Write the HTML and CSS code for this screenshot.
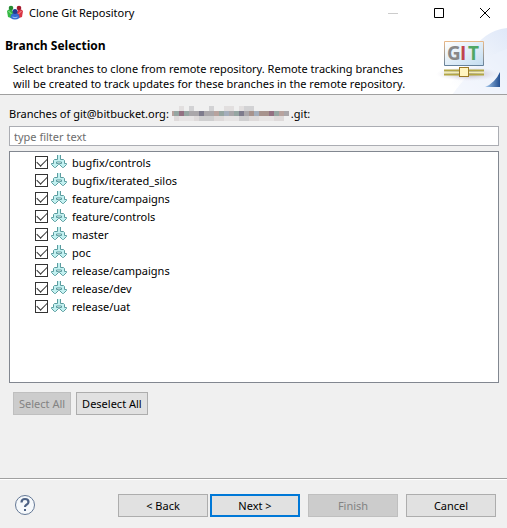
FILE: index.html
```html
<!DOCTYPE html>
<html lang="en">
<head>
<meta charset="utf-8">
<title>Clone Git Repository</title>
<link rel="stylesheet" href="styles.css">
</head>
<body>
<svg width="0" height="0" class="defs" aria-hidden="true">
  <symbol id="branch" viewBox="0 0 16 14">
    <path d="M6.500 0v4.500h-3l-1 1v3h-2v1l3 3h1l3-3v-1h-2v-1.500h5v1.500h-2v1l3 3h1l3-3v-1h-2v-3l-1-1h-3v-4.500" fill="#c3f1f1" stroke="#5a9c9f"/>
  </symbol>
</svg>
<div class="window">
  <header class="titlebar">
    <svg class="app-icon" width="16" height="16" viewBox="0 0 16 16" aria-hidden="true">
      <path d="M0 6q2-3 5-1l2 4-3 4-3-1z" fill="#35b944"/><circle cx="4" cy="3" r="2.300" fill="#238a32"/><path d="M1.500 6l3 3" stroke="#9be8a0"/>
      <path d="M16 6q-2-3-5-1L9 9l3 4 3-1z" fill="#d93545"/><circle cx="12" cy="3" r="2.300" fill="#a3192e"/><path d="M14.500 6l-3 3" stroke="#f4a0a5"/>
      <path d="M3.500 13q0-5 4.500-5t4.500 5q-4.500 3-9 0z" fill="#356bd2"/><circle cx="8" cy="6.500" r="2.500" fill="#203b91"/><path d="M5.500 12q2.500 1.500 5 0" stroke="#9fc4f5" fill="none"/>
    </svg>
    <h1>Clone Git Repository</h1>
    <div class="controls">
      <button aria-label="Minimize" disabled><svg width="10" height="10"><path d="M0 5.500h10" stroke="#ccc"/></svg></button>
      <button aria-label="Maximize"><svg width="10" height="10"><path d="M.5.5h9v9h-9z" stroke="#000" fill="none"/></svg></button>
      <button aria-label="Close"><svg width="10" height="10"><path d="M0 0l10 10M10 0L0 10" stroke="#000"/></svg></button>
    </div>
  </header>
  <section class="banner">
    <div class="intro">
      <h2>Branch Selection</h2>
      <p>Select branches to clone from remote repository. Remote tracking branches<br>will be created to track updates for these branches in the remote repository.</p>
    </div>
    <svg class="logo" width="75" height="70" viewBox="0 0 75 70" aria-hidden="true">
      <defs>
        <linearGradient id="sky" x1="0" y1="1" x2="1" y2="0"><stop offset="0.2" stop-color="#fff"/><stop offset="1" stop-color="#dfe8f8"/></linearGradient>
        <linearGradient id="panel" x1="0" y1="0" x2="1" y2="1"><stop offset="0" stop-color="#fff"/><stop offset="1" stop-color="#c3dcf0"/></linearGradient>
        <linearGradient id="frame" x1="0" y1="0" x2="0" y2="1"><stop offset="0" stop-color="#e8b98a"/><stop offset="1" stop-color="#65819b"/></linearGradient>
        <linearGradient id="corner" x1="0" y1="0" x2="1" y2="0"><stop offset="0" stop-color="#a9cdf0"/><stop offset="1" stop-color="#234f91"/></linearGradient>
        <radialGradient id="shade"><stop offset="0" stop-color="#b9a9b4"/><stop offset="1" stop-color="#d8d8e8" stop-opacity="0"/></radialGradient>
      </defs>
      <path d="M0 70Q25 60 38 30Q50 6 75 3v67z" fill="url(#sky)"/>
      <path d="M20 70Q48 31 75 24v46z" fill="#edf2fc" opacity=".6"/>
      <ellipse cx="36" cy="49" rx="32" ry="7" fill="url(#shade)"/>
      <path d="M12.500 16.500h39v24h-39z" fill="url(#panel)" stroke="url(#frame)"/>
      <text class="git" x="15" y="35"><tspan fill="#888">G</tspan><tspan x="28" fill="#c0444d">I</tspan><tspan x="36" fill="#4fa765">T</tspan></text>
      <path d="M12 45.500h40M12 49.500h40" stroke="#b3a744" stroke-width="2"/>
      <path d="M12 47.500h40" stroke="#f3eeb5"/>
      <rect x="27.500" y="42.500" width="9" height="9" fill="#fff4bf" stroke="#9b7925"/>
      <path d="M68 47v15H53q10-4 15-15z" fill="url(#corner)"/>
    </svg>
  </section>
  <main class="content">
    <label class="caption" for="filter">Branches of git@bitbucket.org:<svg class="redacted" width="118" height="16" viewBox="0 0 118 16" shape-rendering="crispEdges" aria-hidden="true">
      <path d="M7 0h5v5h-5zM52 0h5v5h-5zM57 0h5v5h-5zM67 0h5v5h-5z" fill="#e2dfdf"/>
      <path d="M17 0h5v5h-5zM37 0h5v5h-5zM72 0h10v5h-10z" fill="#d2d2d4"/>
      <path d="M2 10h5v5H2zM22 10h5v5h-5zM42 10h10v5H42zM77 10h10v5H77zM102 10h10v5h-10z" fill="#dedada"/>
      <path d="M7 10h15v5H7zM52 10h15v5H52zM87 10h15v5H87z" fill="#e6e4e4"/>
      <path d="M27 10h15v5H27zM67 10h10v5H67z" fill="#cfcfd0"/>
      <path d="M0 5h2v5H0zM42 5h5v5h-5zM107 5h5v5h-5z" fill="#b8a39e"/>
      <path d="M2 5h5v5H2zM12 5h5v5h-5zM47 5h5v5h-5zM62 5h5v5h-5zM102 5h5v5h-5z" fill="#96a6a2"/>
      <path d="M7 5h5v5H7zM97 5h5v5h-5z" fill="#937283"/>
      <path d="M17 5h10v5H17zM32 5h10v5H32zM57 5h5v5h-5zM72 5h5v5h-5zM112 5h5v5h-5z" fill="#aaa7aa"/>
      <path d="M27 5h5v5h-5zM67 5h5v5h-5z" fill="#7e7c8d"/>
      <path d="M52 5h5v5h-5zM82 5h5v5h-5z" fill="#a4aebc"/>
      <path d="M77 5h5v5h-5zM87 5h10v5H87z" fill="#a7938d"/>
    </svg>.git:</label>
    <input class="filter" id="filter" type="text" placeholder="type filter text">
    <ul class="tree">
      <li><label><input type="checkbox" checked><svg width="16" height="14"><use href="#branch"/></svg>bugfix/controls</label></li>
      <li><label><input type="checkbox" checked><svg width="16" height="14"><use href="#branch"/></svg>bugfix/iterated_silos</label></li>
      <li><label><input type="checkbox" checked><svg width="16" height="14"><use href="#branch"/></svg>feature/campaigns</label></li>
      <li><label><input type="checkbox" checked><svg width="16" height="14"><use href="#branch"/></svg>feature/controls</label></li>
      <li><label><input type="checkbox" checked><svg width="16" height="14"><use href="#branch"/></svg>master</label></li>
      <li><label><input type="checkbox" checked><svg width="16" height="14"><use href="#branch"/></svg>poc</label></li>
      <li><label><input type="checkbox" checked><svg width="16" height="14"><use href="#branch"/></svg>release/campaigns</label></li>
      <li><label><input type="checkbox" checked><svg width="16" height="14"><use href="#branch"/></svg>release/dev</label></li>
      <li><label><input type="checkbox" checked><svg width="16" height="14"><use href="#branch"/></svg>release/uat</label></li>
    </ul>
    <div class="selection">
      <button class="btn" disabled>Select All</button>
      <button class="btn">Deselect All</button>
    </div>
  </main>
  <footer class="footer">
    <button class="help" aria-label="Help"><svg width="22" height="22" viewBox="0 0 22 22"><circle cx="11" cy="11" r="9.500" fill="#f5f8fb" stroke="#647896"/><path d="M7.500 8.500q0-3.500 3.500-3.500t3.500 3q0 1.500-2 2.700-1.500 1-1.500 2.300" fill="none" stroke="#4d6285" stroke-width="2.200"/><path d="M10 15h2v2h-2z" fill="#4d6285"/></svg></button>
    <div class="nav">
      <button class="btn">&lt; Back</button>
      <button class="btn primary">Next &gt;</button>
    </div>
    <button class="btn wide" disabled>Finish</button>
    <button class="btn wide">Cancel</button>
  </footer>
</div>
</body>
</html>
```
FILE: styles.css
```css
* { box-sizing: border-box; }
body { margin: 0; background: #f0f0f0; color: #000; font: 11px/15px "Noto Sans", "Segoe UI", sans-serif; }
h1, h2, p, ul { margin: 0; padding: 0; font-size: inherit; }
button, input { font: inherit; color: inherit; }
svg { display: block; flex: none; }
.defs { position: absolute; }
.window { min-height: 100vh; display: flex; flex-direction: column; }
.titlebar { display: flex; align-items: center; height: 25px; padding-left: 7px; gap: 6px; background: #fff; }
.titlebar h1 { flex: 1; font-weight: 400; }
.controls { display: flex; }
.controls button { width: 46px; height: 25px; padding: 0 17px 0 19px; border: 0; background: none; }
.banner { display: flex; justify-content: space-between; height: 70px; background: #fff; border-bottom: 1px solid #a0a0a0; overflow: hidden; }
.intro { padding: 13px 0 0 5px; white-space: nowrap; width: 0; flex: 1; }
.intro h2 { font-family: "Open Sans", sans-serif; font-size: 12px; font-weight: 700; }
.intro p { padding: 8px 0 0 8px; }
.git { font: 700 19px "Open Sans", sans-serif; }
.content { flex: 1; display: flex; flex-direction: column; padding: 11px 8px 0 9px; }
.caption { display: flex; height: 16px; margin-bottom: 4px; }
.redacted { margin: 0 1px 0 3px; }
.filter { width: 100%; height: 20px; padding: 0 4px; border: 1px solid #abadb3; background: #fff; }
.filter::placeholder { color: #6d6d6d; opacity: 1; }
.tree { flex: 1; margin-top: 5px; padding: 1px 0 0 25px; border: 1px solid #828790; background: #fff; list-style: none; }
.tree label { display: flex; align-items: center; height: 18px; }
.tree input { display: grid; place-items: center; appearance: none; width: 13px; height: 13px; margin: 0 3px 0 0; border: 1px solid #333; background: #fff; }
.tree input:checked::before { content: ""; width: 9px; height: 5px; margin-bottom: 3px; border: solid #333; border-width: 0 0 1px 1px; transform: rotate(-45deg); }
.tree svg { margin-right: 5px; }
.selection { display: flex; gap: 5px; padding: 9px 4px 63px; }
.btn { height: 23px; padding: 0 5px; border: 1px solid #adadad; background: #e1e1e1; line-height: 15px; white-space: nowrap; }
.btn:disabled { color: #838383; border-color: #bfbfbf; background: #ccc; }
.footer { display: flex; align-items: center; gap: 8px; height: 50px; padding: 3px 11px 0 14px; border-top: 1px solid #a0a0a0; box-shadow: inset 0 1px #fff; }
.help { margin-right: auto; padding: 0; border: 0; background: none; }
.nav { display: flex; gap: 2px; }
.nav .btn, .wide { width: 90px; }
.primary { border: 2px solid #0078d7; }
```
